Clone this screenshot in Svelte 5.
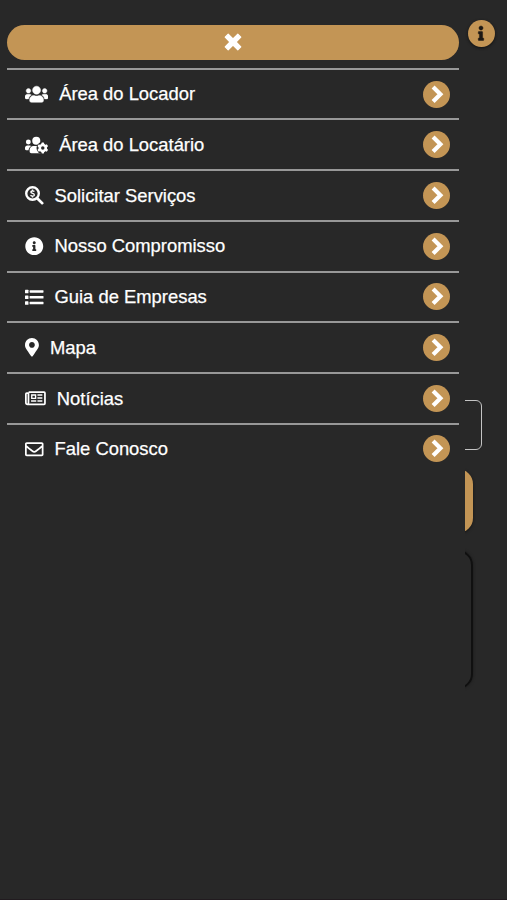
<script>
  const items = [
    { icon: 'users', w: 640, label: 'Área do Locador' },
    { icon: 'cog', w: 640, label: 'Área do Locatário' },
    { icon: 'search', w: 512, label: 'Solicitar Serviços' },
    { icon: 'info', w: 512, label: 'Nosso Compromisso' },
    { icon: 'list', w: 512, label: 'Guia de Empresas' },
    { icon: 'pin', w: 384, label: 'Mapa' },
    { icon: 'news', w: 576, label: 'Notícias' },
    { icon: 'mail', w: 512, label: 'Fale Conosco' }
  ];
</script>

<div class="screen">
  <div class="input-box"></div>
  <div class="page-button"></div>
  <div class="card"></div>
  <button class="info" aria-label="Info">
    <svg viewBox="0 0 192 512" width="6" height="14.500"><path d="M20 424.229h20V279.771H20c-11.046 0-20-8.954-20-20V212c0-11.046 8.954-20 20-20h112c11.046 0 20 8.954 20 20v212.229h20c11.046 0 20 8.954 20 20V492c0 11.046-8.954 20-20 20H20c-11.046 0-20-8.954-20-20v-47.771c0-11.046 8.954-20 20-20zM96 0C56.235 0 24 32.235 24 72s32.235 72 72 72 72-32.235 72-72S135.764 0 96 0z" fill="#1c1814" stroke="#1c1814" stroke-width="16" /></svg>
  </button>

  <nav class="drawer">
    <button class="close" aria-label="Fechar">
      <svg viewBox="0 0 18 18" width="18" height="18"><path d="M4.200 1.200 9 6 13.800 1.200 16.800 4.200 12 9 16.800 13.800 13.800 16.800 9 12 4.200 16.800 1.200 13.800 6 9 1.200 4.200z" fill="#fff" stroke="#fff" stroke-width="1.200" stroke-linejoin="round" /></svg>
    </button>
    <ul>
      {#each items as item}
        <li>
          <svg class="icon" viewBox="0 0 {item.w} 512" style:width="{(item.w / 512) * 18.5}px">
            {#if item.icon === 'users'}
              <path stroke="#fff" stroke-width="12" d="M96 224c35.3 0 64-28.7 64-64s-28.7-64-64-64-64 28.7-64 64 28.7 64 64 64zm448 0c35.3 0 64-28.7 64-64s-28.7-64-64-64-64 28.7-64 64 28.7 64 64 64zm32 32h-64c-17.6 0-33.5 7.1-45.1 18.6 40.3 22.1 68.9 62 75.1 109.4h66c17.7 0 32-14.3 32-32v-32c0-35.3-28.7-64-64-64zm-256 0c61.9 0 112-50.1 112-112S381.9 32 320 32 208 82.1 208 144s50.1 112 112 112zm76.8 32h-8.3c-20.8 10-43.9 16-68.5 16s-47.6-6-68.5-16h-8.3C179.6 288 128 339.6 128 403.2V432c0 26.5 21.5 48 48 48h288c26.5 0 48-21.5 48-48v-28.8c0-63.6-51.6-115.2-115.2-115.2zm-223.7-13.4C161.5 263.1 145.6 256 128 256H64c-35.3 0-64 28.7-64 64v32c0 17.7 14.3 32 32 32h65.9c6.3-47.4 34.9-87.3 75.2-109.4z" />
            {:else if item.icon === 'cog'}
              <circle cx="92" cy="166" r="68" />
              <circle cx="312" cy="132" r="112" />
              <path d="M174 278C161 266 146 260 128 260H64c-35 0-64 28-64 64v36c0 18 14 32 32 32h65c6-47 35-88 77-114z" />
              <path d="M235 276c-62 0-107 50-107 112v44c0 26 21 46 48 46h280l-54-50 8-152z" />
              <circle cx="488" cy="332" r="170" fill="#282828" />
              <g transform="translate(492 332)">
                {#each [0, 60, 120] as a}
                  <rect x="-36" y="-150" width="72" height="300" rx="18" transform="rotate({a})" />
                {/each}
                <circle r="120" />
                <circle r="48" fill="#282828" />
              </g>
            {:else if item.icon === 'search'}
              <circle cx="208" cy="208" r="174" fill="none" stroke="#fff" stroke-width="66" />
              <path d="m338 338 136 136" fill="none" stroke="#fff" stroke-width="78" stroke-linecap="round" />
              <path d="M208 96v32m0 160v32M260 154c-22-24-98-26-98 14 0 50 96 26 96 78 0 44-76 42-106 12" fill="none" stroke="#fff" stroke-width="38" />
            {:else if item.icon === 'info'}
              <path d="M256 8C119.043 8 8 119.083 8 256c0 136.997 111.043 248 248 248s248-111.003 248-248C504 119.083 392.957 8 256 8zm0 110c23.196 0 42 18.804 42 42s-18.804 42-42 42-42-18.804-42-42 18.804-42 42-42zm56 254c0 6.627-5.373 12-12 12h-88c-6.627 0-12-5.373-12-12v-24c0-6.627 5.373-12 12-12h12v-64h-12c-6.627 0-12-5.373-12-12v-24c0-6.627 5.373-12 12-12h64c6.627 0 12 5.373 12 12v100h12c6.627 0 12 5.373 12 12v24z" />
            {:else if item.icon === 'list'}
              {#each [48, 208, 368] as y}
                <rect x="0" {y} width="96" height="96" rx="16" />
                <rect x="128" y={y + 14} width="384" height="68" rx="16" />
              {/each}
            {:else if item.icon === 'pin'}
              <path d="M172.268 501.67C26.97 291.031 0 269.413 0 192 0 85.961 85.961 0 192 0s192 85.961 192 192c0 77.413-26.97 99.031-172.268 309.67-9.535 13.774-29.93 13.773-39.464 0zM192 272c44.183 0 80-35.817 80-80s-35.817-80-80-80-80 35.817-80 80 35.817 80 80 80z" />
            {:else if item.icon === 'news'}
              <path d="M102 88h426c13 0 24 11 24 24v288c0 13-11 24-24 24H72c-26 0-48-20-48-48V136c0-13 11-24 24-24h48M96 88v288c0 26-10 48-26 48" fill="none" stroke="#fff" stroke-width="48" />
              <path fill-rule="evenodd" d="M168 144h144v136H168zm38 40v56h68v-56zM168 312h144v44H168zM344 144h136v44H344zm0 84h136v44H344zm0 84h136v44H344z" />
            {:else}
              <path d="M464 64H48C21.49 64 0 85.49 0 112v288c0 26.51 21.49 48 48 48h416c26.51 0 48-21.49 48-48V112c0-26.51-21.49-48-48-48zm0 48v40.805c-22.422 18.259-58.168 46.651-134.587 106.49-16.841 13.247-50.201 45.072-73.413 44.701-23.208.375-56.579-31.459-73.413-44.701C106.18 199.465 70.425 171.067 48 152.805V112h416zM48 400V214.398c22.914 18.251 55.409 43.862 104.938 82.646 21.857 17.205 60.134 55.186 103.062 54.955 42.717.231 80.509-37.199 103.053-54.947 49.528-38.783 82.032-64.401 104.947-82.653V400H48z" />
            {/if}
          </svg>
          <span class="label">{item.label}</span>
          <span class="go">
            <svg viewBox="0 0 27 27" width="27" height="27"><path d="M11.600 7.500 17.400 13.300 11.600 19.100" fill="none" stroke="#fff" stroke-width="4.200" stroke-linecap="square" /></svg>
          </span>
        </li>
      {/each}
    </ul>
  </nav>
</div>

<style>
  :global(body) { background: #282828; }
  .screen {
    position: relative;
    width: 507px;
    height: 900px;
    overflow: hidden;
    box-sizing: border-box;
    background: #282828;
    border-bottom: 1px solid #211b1f;
    font-family: "Liberation Sans", Arial, sans-serif;
  }
  button { border: 0; padding: 0; }
  .drawer {
    position: relative;
    box-sizing: border-box;
    width: 465px;
    height: 900px;
    padding: 25px 6px 0 7px;
    background: #282828;
  }
  .close {
    display: flex;
    align-items: center;
    justify-content: center;
    width: 452px;
    height: 34.5px;
    border-radius: 18px;
    background: #c39555;
  }
  ul { list-style: none; margin: 8.300px 0 0; padding: 0; width: 452px; }
  li {
    display: flex;
    align-items: center;
    box-sizing: border-box;
    height: 50.7px;
    padding: 0 9.5px 0 18px;
    border-top: 2px solid #989898;
  }
  .icon { flex: none; height: 18.5px; fill: #fff; }
  .label {
    flex: 1;
    margin-left: 11px;
    padding-top: 0.5px;
    color: #fff;
    font-size: 18.4px;
    line-height: 24px;
    white-space: nowrap;
    -webkit-text-stroke: 0.25px #fff;
  }
  .go {
    display: flex;
    width: 27px;
    height: 27px;
    border-radius: 50%;
    background: #c39555;
  }
  .info {
    position: absolute;
    left: 468px;
    top: 20px;
    display: flex;
    align-items: center;
    justify-content: center;
    width: 26.5px;
    height: 27px;
    border-radius: 50%;
    background: #c39555;
    box-shadow: 0 1px 3px #111;
  }
  .info svg { overflow: visible; }
  .input-box {
    position: absolute;
    left: 25px;
    top: 400px;
    box-sizing: border-box;
    width: 456.5px;
    height: 49.5px;
    border: 1.5px solid #c4c4c4;
    border-radius: 6px;
  }
  .page-button {
    position: absolute;
    left: 34px;
    top: 469px;
    width: 439px;
    height: 64px;
    border-radius: 15px;
    background: #c39555;
    box-shadow: 0 1px 3px #151515;
  }
  .card {
    position: absolute;
    left: 34px;
    top: 550px;
    box-sizing: border-box;
    width: 439px;
    height: 139px;
    border: 2px solid #101010;
    border-radius: 15px;
    box-shadow: 0 0 3px #181818;
  }
</style>
